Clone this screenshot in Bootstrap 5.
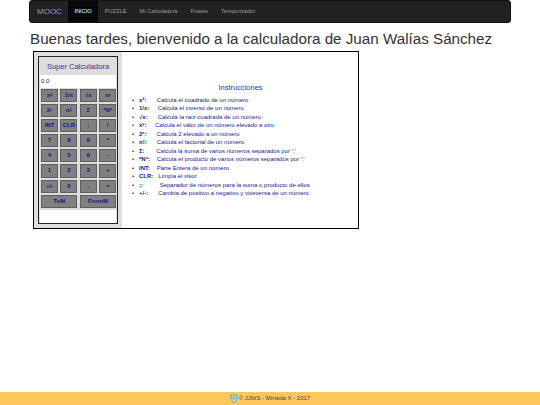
<!DOCTYPE html>
<html lang="es">
<head>
<meta charset="utf-8">
<title>MOOC</title>
<link href="https://cdn.jsdelivr.net/npm/bootstrap@5.3.0/dist/css/bootstrap.min.css" rel="stylesheet">
<style>
html,body{height:100%}
body{font-family:"Liberation Sans",Arial,sans-serif;background:#fff;color:#333;display:flex;flex-direction:column;height:405px;overflow:hidden}
.page-wrap{width:482px;margin-left:29px;flex:1 0 auto}
.top-bar{background:#222;border:1px solid #111;border-radius:3px;height:23px;padding:0;align-items:stretch;justify-content:flex-start;flex-wrap:nowrap}
.top-brand{color:#9d9d9d;font-size:8px;padding:0 6px 0 7px;display:flex;align-items:center;text-decoration:none}
.top-link{color:#9d9d9d;font-size:5.7px;padding:0 6.5px;display:flex;align-items:center;text-decoration:none;height:100%}
.top-link.on{background:#080808;color:#fff}
.greet{font-size:15.2px;font-weight:400;line-height:20px;color:#333;margin:6px 0 2px 1px;white-space:nowrap}
.calc-frame{width:326px;height:178px;margin-left:4px;border:1px solid #000;background:#fff}
.calc-side{width:88px;background:#ddd;padding:4px}
.calc-box{height:168px;width:80px;border:1px solid #222;background:#ddd;padding:1px}
.calc-title{color:#33339a;font-size:7.5px;height:17px;line-height:17px;text-align:center}
.calc-view{background:#fff;color:#224;font-size:6px;height:13px;line-height:12px;margin-bottom:1px;padding-left:1px}
.key-grid{display:grid;grid-template-columns:repeat(4,17px);gap:2px 2.4px;padding-left:1px}
.key{background:#808080;color:#14148c;border:1px solid #5f5f5f;font-size:6px;font-weight:700;height:13.1px;line-height:11px;text-align:center;padding:0}
.key.wide{grid-column:span 2}
.key sup{font-size:4px;line-height:0;top:-.35em}
.calc-blank{background:#fff;height:13px;margin-top:2px}
.help{color:#1a1a90;font-size:6px;flex:1;padding-top:31px;line-height:7.7px}
.help-head{font-size:7.5px;color:#33339a;text-align:center;padding-left:17px;margin-bottom:4px;line-height:9px;width:220px}
.help ul{margin:0;padding-left:10px;line-height:8.45px;list-style:none}
.help li::before{content:"•";display:inline-block;width:7px}
.help sup{font-size:4px;line-height:0}
.foot{background:#ffc65c;color:#444;height:13px;font-size:6px;flex:0 0 13px}
.foot svg{width:8px;height:9px;margin-right:1px}
</style>
</head>
<body>
<div class="page-wrap">
  <nav class="navbar top-bar">
    <a class="top-brand" href="#">MOOC</a>
    <a class="top-link on" href="#">INICIO</a>
    <a class="top-link" href="#">PUZZLE</a>
    <a class="top-link" href="#">Mi Calculadora</a>
    <a class="top-link" href="#">Frases</a>
    <a class="top-link" href="#">Temporizador</a>
  </nav>
  <h1 class="greet">Buenas tardes, bienvenido a la calculadora de Juan Walías Sánchez</h1>
  <div class="calc-frame d-flex">
    <div class="calc-side">
      <div class="calc-box">
        <div class="calc-title">Super Calculadora</div>
        <div class="calc-view">0.0</div>
        <div class="key-grid">
          <div class="key">x<sup>2</sup></div><div class="key">1/x</div><div class="key">√x</div><div class="key">x<sup>y</sup></div>
          <div class="key">2<sup>x</sup></div><div class="key">n!</div><div class="key">Σ</div><div class="key">*N*</div>
          <div class="key">INT</div><div class="key">CLR</div><div class="key">;</div><div class="key">/</div>
          <div class="key">7</div><div class="key">8</div><div class="key">9</div><div class="key">*</div>
          <div class="key">4</div><div class="key">5</div><div class="key">6</div><div class="key">-</div>
          <div class="key">1</div><div class="key">2</div><div class="key">3</div><div class="key">+</div>
          <div class="key">+/-</div><div class="key">0</div><div class="key">.</div><div class="key">=</div>
          <div class="key wide">ToM</div><div class="key wide">FromM</div>
        </div>
        <div class="calc-blank"></div>
      </div>
    </div>
    <div class="help">
      <div class="help-head">Instrucciones</div>
      <ul>
        <li><b>x<sup>2</sup>:</b>&nbsp;&nbsp;&nbsp;&nbsp;&nbsp;&nbsp;Calcula el cuadrado de un número</li>
        <li><b>1/x:</b>&nbsp;&nbsp;&nbsp;&nbsp;&nbsp;Calcula el inverso de un número</li>
        <li><b>√x:</b>&nbsp;&nbsp;&nbsp;&nbsp;&nbsp;&nbsp;Calcula la raíz cuadrada de un número</li>
        <li><b>x<sup>y</sup>:</b>&nbsp;&nbsp;&nbsp;&nbsp;&nbsp;Calcula el valor de un número elevado a otro</li>
        <li><b>2<sup>x</sup>:</b>&nbsp;&nbsp;&nbsp;&nbsp;&nbsp;&nbsp;Calcula 2 elevado a un número</li>
        <li><b>n!:</b>&nbsp;&nbsp;&nbsp;&nbsp;&nbsp;&nbsp;Calcula el factorial de un número</li>
        <li><b>Σ:</b>&nbsp;&nbsp;&nbsp;&nbsp;&nbsp;&nbsp;&nbsp;Calcula la suma de varios números separados por ';'</li>
        <li><b>*N*:</b>&nbsp;&nbsp;&nbsp;&nbsp;Calcula el producto de varios números separados por ';'</li>
        <li><b>INT:</b>&nbsp;&nbsp;&nbsp;&nbsp;Parte Entera de un número</li>
        <li><b>CLR:</b>&nbsp;&nbsp;&nbsp;Limpia el visor</li>
        <li><b>;:</b>&nbsp;&nbsp;&nbsp;&nbsp;&nbsp;&nbsp;&nbsp;&nbsp;&nbsp;&nbsp;Separador de números para la suma o producto de ellos</li>
        <li><b>+/-:</b>&nbsp;&nbsp;&nbsp;&nbsp;&nbsp;&nbsp;Cambia de positivo a negativo y viceversa de un número</li>
      </ul>
    </div>
  </div>
</div>
<footer class="foot d-flex align-items-center justify-content-center">
  <svg viewBox="0 0 8 9"><path d="M1 1h6v4.5L4 8.5 1 5.5z" fill="#bfeef5" stroke="#2a9bb5" stroke-width=".8"/><circle cx="4" cy="4" r="1.4" fill="none" stroke="#2a7f95" stroke-width=".6"/></svg>
  <span>© JJWS - Miríada X - 2017</span>
</footer>
<script src="https://cdn.jsdelivr.net/npm/bootstrap@5.3.0/dist/js/bootstrap.bundle.min.js"></script>
</body>
</html>
